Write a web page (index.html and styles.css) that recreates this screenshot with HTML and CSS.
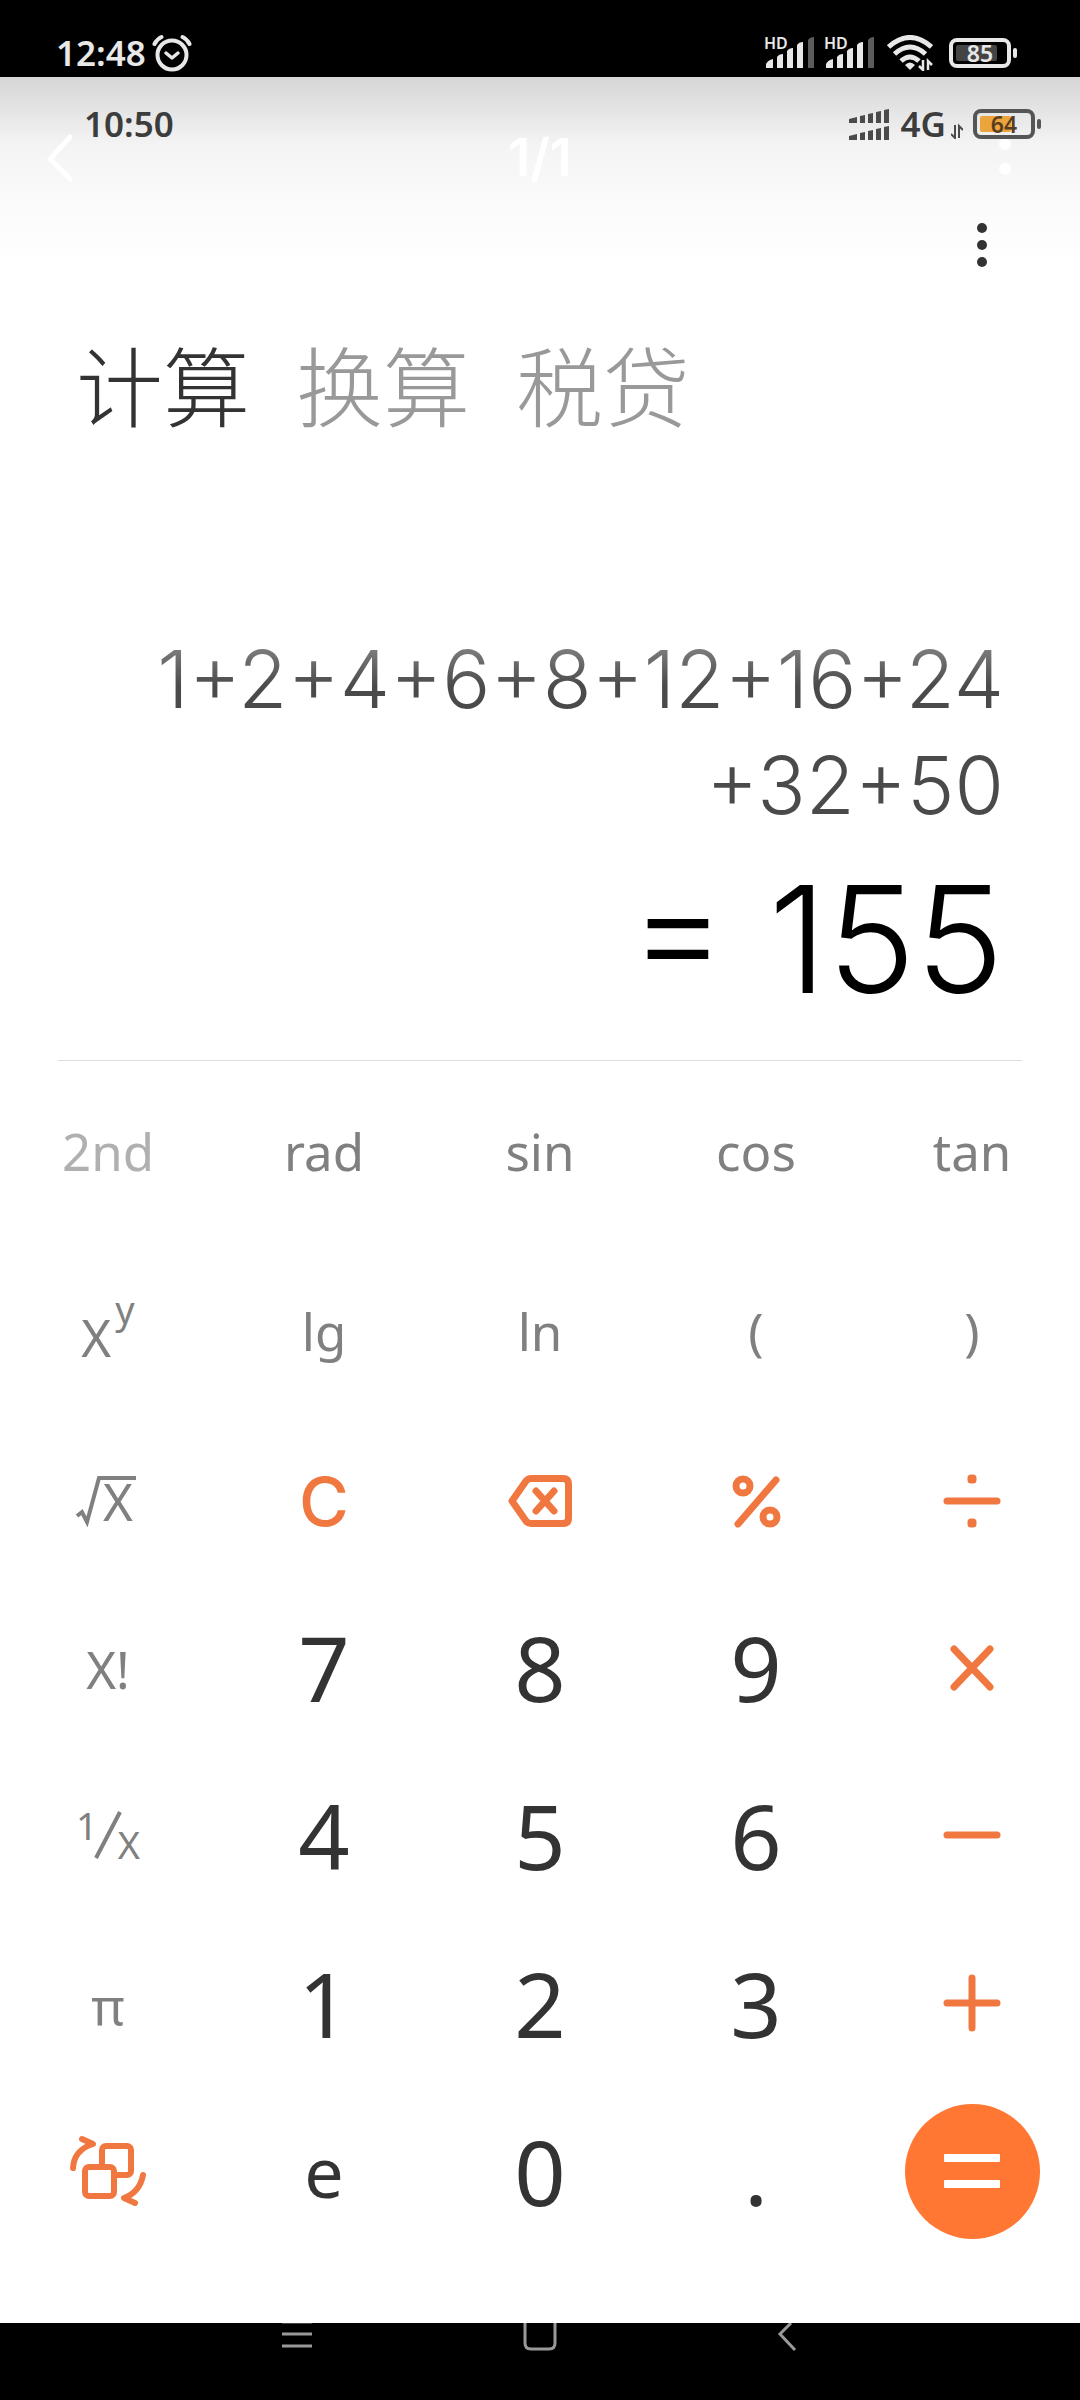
FILE: index.html
```html
<!DOCTYPE html>
<html lang="zh-CN">
<head>
  <meta charset="UTF-8">
  <meta name="viewport" content="width=device-width, initial-scale=1.0">
  <link rel="stylesheet" href="styles.css">
  <title>计算器</title>
</head>
<body>

<!-- Phone status bar -->
<div class="status-bar">
  <span class="time">12:48</span>
  <svg class="alarm" width="40" height="38" viewBox="0 0 40 38" fill="none" stroke="#e8e8e8">
    <circle cx="20" cy="21" r="14.500" stroke-width="4"/>
    <path d="M14 19l6 5 6-5" stroke-width="3.500" stroke-linecap="round" stroke-linejoin="round"/>
    <path d="M2.500 10Q5 5 9.500 3M37.500 10Q35 5 30.500 3" stroke-width="4" stroke-linecap="round"/>
  </svg>
  <div class="status-icons">
    <div class="signal">
      <span class="hd">HD</span>
      <svg width="50" height="32" viewBox="0 0 50 32" fill="#e8e8e8">
        <path d="M1 31v-4q2-4 7-5v9zM12 31V20q2-3 6-3v14zM22 31V14q2-3 6-3v20zM32 31V8q2-3 6-3v26z"/>
        <path d="M43 31V3q2-3 6-3v31z" fill="#5c5c5c"/>
      </svg>
    </div>
    <div class="signal">
      <span class="hd">HD</span>
      <svg width="50" height="32" viewBox="0 0 50 32" fill="#e8e8e8">
        <path d="M1 31v-4q2-4 7-5v9zM12 31V20q2-3 6-3v14zM22 31V14q2-3 6-3v20zM32 31V8q2-3 6-3v26z"/>
        <path d="M43 31V3q2-3 6-3v31z" fill="#5c5c5c"/>
      </svg>
    </div>
    <svg class="wifi" width="46" height="36" viewBox="0 0 46 36" fill="none" stroke="#e8e8e8" stroke-width="5">
      <path d="M1.500 12Q23-7 44.500 12M7.500 19Q23 5 38.500 19M14 26Q23 18 32 26"/>
      <path d="M18 30q5-5 10 0l-5 5z" fill="#e8e8e8" stroke="none"/>
      <path d="M36 25v10l-4-4M41 35V26l4 4" stroke-width="2.500"/>
    </svg>
    <div class="battery">
      <span class="level" style="width: 85%"></span>
      <span class="percent">85</span>
    </div>
  </div>
</div>

<main class="app">
  <!-- Gallery controls over the calculator -->
  <div class="viewer-bar">
    <button class="viewer-button" aria-label="返回">
      <svg width="30" height="50" viewBox="0 0 30 50" fill="none" stroke="#fff" stroke-width="5" stroke-linecap="round" stroke-linejoin="round">
        <path d="M25 4L5 26l20 20"/>
      </svg>
    </button>
    <span class="counter">1/1</span>
    <button class="viewer-button more" aria-label="更多">
      <svg width="12" height="50" viewBox="0 0 12 50" fill="#fff">
        <circle cx="6" cy="11" r="6"/>
        <circle cx="6" cy="36" r="6"/>
      </svg>
    </button>
  </div>

  <div class="status-bar inner">
    <span class="time">10:50</span>
    <div class="status-icons">
      <svg class="dual-signal" width="42" height="32" viewBox="0 0 42 32" fill="#4a4a4a">
        <path d="M1 15v-4l8-2v6zM12 15V8l5-1v8zM20 15V6l5-1v10zM28 15V4l5-1v12zM36 15V2l5-1v14z"/>
        <path d="M1 32v-4l8-2v6zM12 32v-7l5-1v8zM20 32v-9l5-1v10zM28 32V21l5-1v12zM36 32V19l5-1v14z"/>
      </svg>
      <span class="network">4G</span>
      <svg class="traffic" width="12" height="16" viewBox="0 0 12 16" fill="none" stroke="#4a4a4a" stroke-width="2">
        <path d="M4 2v13L0 11M8 15V3l4 4"/>
      </svg>
      <div class="battery">
        <span class="level" style="width: 64%"></span>
        <span class="percent">64</span>
      </div>
    </div>
  </div>

  <div class="app-bar">
    <button class="menu" aria-label="菜单">
      <svg width="12" height="46" viewBox="0 0 12 46" fill="#333">
        <circle cx="6" cy="6" r="5"/>
        <circle cx="6" cy="23" r="5"/>
        <circle cx="6" cy="40" r="5"/>
      </svg>
    </button>
  </div>

  <nav class="tabs">
    <button class="tab active">计算</button>
    <button class="tab">换算</button>
    <button class="tab">税贷</button>
  </nav>

  <section class="display">
    <div class="expression">1+2+4+6+8+12+16+24<br>+32+50</div>
    <div class="result">= 155</div>
  </section>

  <section class="keypad">
    <div class="row top">
      <button class="key fn off">2nd</button>
      <button class="key fn">rad</button>
      <button class="key fn">sin</button>
      <button class="key fn">cos</button>
      <button class="key fn">tan</button>
    </div>
    <div class="row">
      <button class="key fn power">X<span class="small">y</span></button>
      <button class="key fn">lg</button>
      <button class="key fn">ln</button>
      <button class="key fn">(</button>
      <button class="key fn">)</button>
    </div>
    <div class="row tools">
      <button class="key fn">
        <span class="root">X
          <svg width="62" height="52" viewBox="0 0 62 52" fill="none" stroke="#808080" stroke-width="4">
            <path d="M2 41l5-4 5 10L24 3h37"/>
          </svg>
        </span>
      </button>
      <button class="key clear">C</button>
      <button class="key icon" aria-label="退格">
        <svg width="72" height="60" viewBox="0 0 72 60">
          <path d="M8 30L22 10q2-2.500 5-2.500h32q5.500 0 5.500 5.500v34q0 5.500-5.500 5.500H27q-3 0-5-2.500z"/>
          <path d="M32 20l18 20M50 20L32 40"/>
        </svg>
      </button>
      <button class="key icon" aria-label="百分号">
        <svg width="60" height="60" viewBox="0 0 60 60">
          <circle cx="17" cy="15" r="7"/>
          <circle cx="44" cy="46" r="7"/>
          <path d="M50 9L12 53"/>
        </svg>
      </button>
      <button class="key icon" aria-label="除">
        <svg width="60" height="60" viewBox="0 0 60 60">
          <path d="M5 30h50"/>
          <path d="M29 7h2v2h-2zM29 51h2v2h-2z"/>
        </svg>
      </button>
    </div>
    <div class="row">
      <button class="key fn low">X!</button>
      <button class="key">7</button>
      <button class="key">8</button>
      <button class="key">9</button>
      <button class="key icon" aria-label="乘">
        <svg width="60" height="60" viewBox="0 0 60 60">
          <path d="M12 12l36 38M48 12L12 50"/>
        </svg>
      </button>
    </div>
    <div class="row">
      <button class="key fn inverse" aria-label="倒数">
        <span class="numerator">1</span>
        <svg width="28" height="48" viewBox="0 0 28 48" stroke="#808080" stroke-width="4">
          <path d="M2 47L26 1"/>
        </svg>
        <span class="denominator">X</span>
      </button>
      <button class="key">4</button>
      <button class="key">5</button>
      <button class="key">6</button>
      <button class="key icon" aria-label="减">
        <svg width="60" height="60" viewBox="0 0 60 60">
          <path d="M5 30h50"/>
        </svg>
      </button>
    </div>
    <div class="row">
      <button class="key fn low">π</button>
      <button class="key">1</button>
      <button class="key">2</button>
      <button class="key">3</button>
      <button class="key icon" aria-label="加">
        <svg width="60" height="60" viewBox="0 0 60 60">
          <path d="M5 30h50M30 5v50"/>
        </svg>
      </button>
    </div>
    <div class="row">
      <button class="key icon" aria-label="切换键盘">
        <svg class="switch" width="80" height="72" viewBox="0 0 80 72">
          <rect x="34" y="11" width="29" height="29" rx="4"/>
          <rect x="17" y="32" width="29" height="29" rx="4" fill="#fff"/>
          <path d="M5 33q1-18 20-24L14 4M75 40q-3 17-19 23l11 5"/>
        </svg>
      </button>
      <button class="key letter">e</button>
      <button class="key">0</button>
      <button class="key">.</button>
      <button class="key" aria-label="等于">
        <span class="equals">
          <svg width="60" height="60" viewBox="0 0 60 60" fill="#fff">
            <rect x="2" y="13" width="56" height="8" rx="1"/>
            <rect x="2" y="39" width="56" height="8" rx="1"/>
          </svg>
        </span>
      </button>
    </div>
  </section>
</main>

<!-- System navigation, clipped by the screen edge -->
<footer class="system-nav">
  <svg width="34" height="28" viewBox="0 0 34 28" stroke="#999" stroke-width="3">
    <path d="M2 11h30M2 23h30"/>
    <path d="M2 0h30" stroke="#444" stroke-width="2"/>
  </svg>
  <svg width="34" height="28" viewBox="0 0 34 28" fill="none" stroke="#999" stroke-width="3">
    <path d="M2 0v20q0 6 6 6h18q6 0 6-6V0"/>
  </svg>
  <svg width="34" height="28" viewBox="0 0 34 28" fill="none" stroke="#999" stroke-width="3">
    <path d="M25 0L14 11l15 16"/>
  </svg>
</footer>

</body>
</html>
```
FILE: styles.css
```css
* {
  box-sizing: border-box;
}

body {
  margin: 0;
  min-height: 100vh;
  display: flex;
  flex-direction: column;
  background-color: #000;
  color: #333;
  font-family: 'Noto Sans', 'Noto Sans CJK SC', sans-serif;
}

button {
  cursor: pointer;
  padding: 0;
  border: none;
  background: none;
  color: inherit;
  font: inherit;
}

svg {
  display: block;
  flex: none;
}

/* status bars */
.status-bar {
  display: flex;
  align-items: center;
  height: 77px;
  padding: 28px 69px 0 56px;
  color: #e8e8e8;
  font-size: 35px;
  font-weight: 600;
  line-height: 48px;
}

.alarm {
  margin-left: 6px;
}

.status-icons {
  display: flex;
  align-items: center;
  margin-left: auto;
}

.signal {
  position: relative;
  width: 50px;
  margin-right: 10px;
}

.hd {
  position: absolute;
  left: -1px;
  top: -4px;
  font-size: 16px;
  line-height: 20px;
}

.wifi {
  margin: 0 16px 0 2px;
}

.battery {
  position: relative;
  width: 62px;
  height: 30px;
  padding: 3px;
  border: 4px solid #e8e8e8;
  border-radius: 8px;
  display: flex;
}

.battery::after {
  content: '';
  position: absolute;
  right: -10px;
  top: 6px;
  width: 4px;
  height: 10px;
  border-radius: 2px;
  background-color: #e8e8e8;
}

.level {
  background-color: #444;
  border-radius: 2px;
}

.percent {
  position: absolute;
  inset: 0;
  text-align: center;
  font-size: 23px;
  line-height: 22px;
}

.inner {
  height: 94px;
  padding: 0 45px 0 84px;
  color: #3c3c3c;
}

.inner .battery {
  border-color: #555;
}

.inner .battery::after {
  background-color: #555;
}

.inner .level {
  background-color: #eba53c;
}

.inner .percent {
  color: #5a3c1e;
}

.network {
  margin: 0 5px 0 11px;
}

.traffic {
  margin: 14px 10px 0 0;
}

/* app */
.app {
  position: relative;
  flex: 1;
  display: flex;
  flex-direction: column;
  background: linear-gradient(#d6d6d6, #e4e4e4 32px, #f4f4f4 68px, #fafafa 120px, #fff 190px);
}

.viewer-bar {
  position: absolute;
  top: 56px;
  left: 0;
  right: 0;
  display: grid;
  grid-template-columns: 1fr auto 1fr;
  align-items: center;
}

.viewer-button {
  margin: 0 45px;
}

.more {
  margin: 0 69px;
  justify-self: end;
}

.counter {
  color: #fff;
  font-family: Inter, sans-serif;
  font-size: 52px;
  font-weight: 600;
  line-height: 50px;
}

.app-bar {
  display: flex;
  justify-content: flex-end;
  align-items: center;
  height: 148px;
  padding-right: 92px;
}

.tabs {
  display: flex;
  gap: 46px;
  padding: 4px 76px 10px;
}

.tab {
  color: #999;
  font-family: 'Noto Sans CJK SC', sans-serif;
  font-size: 87px;
  font-weight: 300;
  line-height: 120px;
}

.tab.active {
  color: #333;
}

.display {
  flex: 1;
  display: flex;
  flex-direction: column;
  justify-content: flex-end;
  gap: 6px;
  margin: 0 58px;
  padding: 0 18px 26px 0;
  border-bottom: 1px solid #ddd;
  font-family: Inter, sans-serif;
  font-weight: 300;
  text-align: right;
}

.expression {
  background: linear-gradient(#808080 20px, #4a4a4a 60px);
  -webkit-background-clip: text;
  background-clip: text;
  color: transparent;
  font-size: 80px;
  line-height: 106px;
}

.result {
  color: #000;
  font-size: 149px;
  line-height: 190px;
}

/* keypad */
.keypad {
  padding: 6px 0 68px;
}

.row {
  display: grid;
  grid-template-columns: repeat(5, 1fr);
}

.row.top {
  margin-bottom: 12px;
}

.key {
  display: flex;
  justify-content: center;
  align-items: center;
  height: 168px;
  font-size: 90px;
  line-height: 100px;
}

.tools .key,
.low {
  padding-top: 4px;
}

.fn {
  color: #808080;
  font-size: 51px;
}

.off {
  color: #b0b0b0;
}

.letter {
  font-size: 70px;
}

.clear {
  color: #f07840;
  font-family: Inter, sans-serif;
  font-size: 68px;
  font-weight: 500;
}

.power {
  padding-top: 12px;
}

.small {
  padding: 0 0 56px 4px;
  font-size: 38px;
}

.root {
  position: relative;
  padding-left: 20px;
}

.root svg {
  position: absolute;
  right: -4px;
  top: 24px;
}

.inverse {
  font-size: 38px;
}

.numerator {
  padding-bottom: 20px;
}

.inverse svg {
  margin: 0 -4px;
}

.denominator {
  padding-top: 18px;
}

.icon svg {
  fill: none;
  stroke: #f07840;
  stroke-width: 7px;
  stroke-linecap: round;
  stroke-linejoin: round;
}

.icon .switch {
  stroke-width: 6px;
}

.equals {
  display: flex;
  justify-content: center;
  align-items: center;
  width: 135px;
  height: 135px;
  border-radius: 50%;
  background-color: #ff7733;
}

/* system navigation */
.system-nav {
  display: flex;
  justify-content: space-between;
  height: 77px;
  padding: 0 280px;
}
```
